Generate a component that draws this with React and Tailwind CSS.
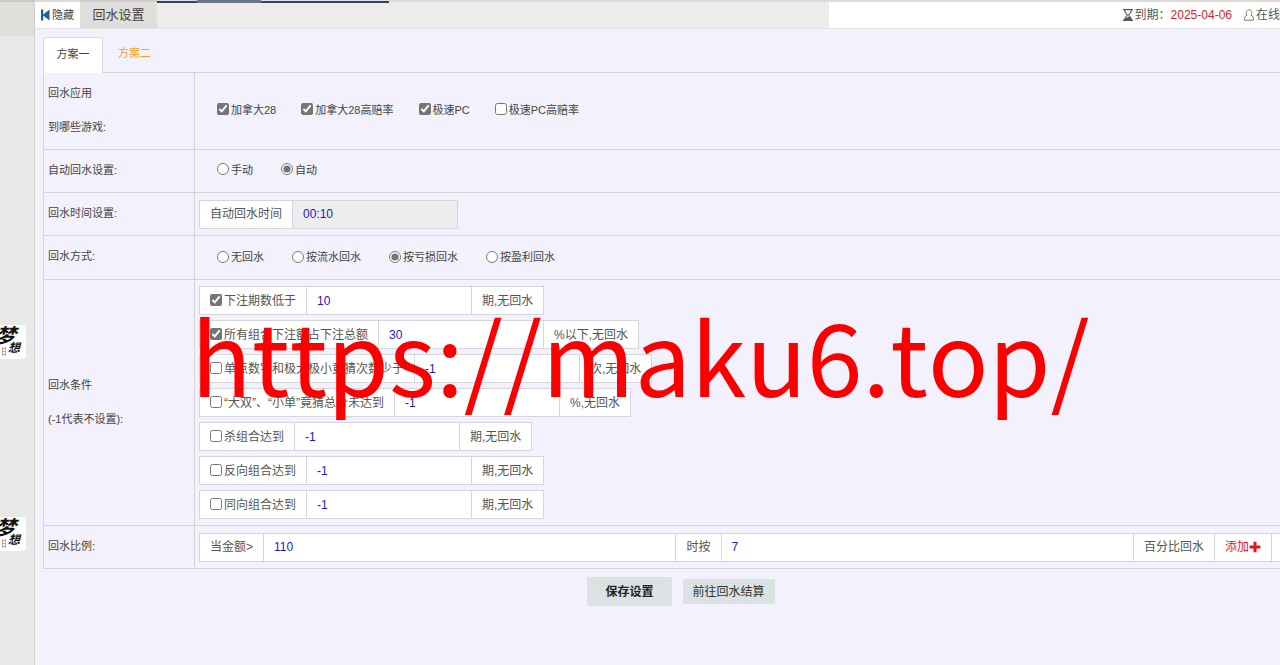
import React from "react";

const FONT = "font-['Liberation_Sans','Noto_Sans_CJK_SC',sans-serif]";

function Avatar() {
  return (
    <div className="relative h-[34px] w-[26px] overflow-hidden rounded-r bg-white font-['Liberation_Serif','Noto_Sans_CJK_SC',serif] font-bold text-[#111] italic">
      <span className="absolute top-px -left-1 text-[20px] leading-5">梦</span>
      <span className="absolute top-[17px] left-2 text-xs leading-3">想</span>
      <svg viewBox="0 0 4 9" className="absolute top-[22px] left-0.5 h-[9px] w-1" fill="none" stroke="#d9a094" aria-hidden="true">
        <path d="M.5 0V9M3.5 0V9M0 1.5H4M0 4.5H4M0 7.5H4" />
      </svg>
    </div>
  );
}

function Row({ label, children, pad = "px-1" }) {
  return (
    <tr className="border-b border-[#d3d3da]">
      <th scope="row" className="border-x border-[#d3d3da] px-1 pb-0.5 text-left align-middle font-normal">
        {label}
      </th>
      <td className={pad}>{children}</td>
    </tr>
  );
}

function Choice({ type, name, label, on }) {
  return (
    <label className="flex items-center gap-0.5">
      <input type={type} name={name} defaultChecked={on} className="mb-0.5 size-3 accent-[#757575]" />
      {label}
    </label>
  );
}

const cell = "flex items-center border border-[#d5d5df] bg-white px-2.5 whitespace-nowrap";
const field = "border-y border-[#d5d5df] bg-white px-2.5 text-[#1a1ac4] outline-none min-w-0";

function Condition({ label, value, unit, on }) {
  return (
    <div className="flex h-[29px] text-xs text-[#555]">
      <label className={`${cell} gap-0.5`}>
        <input type="checkbox" defaultChecked={on} className="mb-0.5 size-3 accent-[#757575]" />
        {label}
      </label>
      <input aria-label={label} defaultValue={value} className={`${field} w-[164px]`} />
      <span className={cell}>{unit}</span>
    </div>
  );
}

const conditions = [
  { label: "下注期数低于", value: "10", unit: "期,无回水", on: true },
  { label: "所有组合下注额占下注总额", value: "30", unit: "%以下,无回水", on: true },
  { label: "单点数字和极大极小竟猜次数少于", value: "-1", unit: "次,无回水" },
  { label: "“大双”、“小单”竟猜总价未达到", value: "-1", unit: "%,无回水" },
  { label: "杀组合达到", value: "-1", unit: "期,无回水" },
  { label: "反向组合达到", value: "-1", unit: "期,无回水" },
  { label: "同向组合达到", value: "-1", unit: "期,无回水" },
];

export default function App() {
  return (
    <div className={`relative flex min-h-screen overflow-hidden bg-[#f3f1fb] text-[11px] text-[#444] ${FONT}`}>
      <aside className="flex w-[35px] shrink-0 flex-col border-r border-[#cfcfd2] bg-[#e9e9e9]">
        <div className="h-9 border-t-2 border-[#cbc9c7] bg-[#e1dfdb]" />
        <div className="mt-[289px] flex flex-col gap-[158px]">
          <Avatar />
          <Avatar />
        </div>
      </aside>

      <main className="min-w-0 flex-1">
        <header className="flex h-[29px] border-b border-[#e4e3e6] bg-white">
          <button type="button" className="flex w-[45px] items-center justify-center gap-0.5 border-t-2 border-[#dcdad8]">
            <svg viewBox="0 0 9 12" className="h-3 w-[9px]" fill="#1c5f9e" aria-hidden="true">
              <path d="M0 0.5H2.2V5.5L8.5 0.5V11.5L2.2 6.5V11.5H0Z" />
            </svg>
            隐藏
          </button>
          <h1 className="flex w-[77px] items-center justify-center border-t-2 border-[#cfcdca] bg-[#e0deda] text-[13px]">
            回水设置
          </h1>
          <div className="flex w-[672px] items-start bg-[#eeecea]">
            <div className="flex h-[3px] w-[232px] border-b-2 border-[#3d4258] bg-[#d8e2ec]">
              <div className="ml-10 h-[3px] w-16 bg-[#6d7688]" />
            </div>
            <div className="h-0.5 flex-1 bg-[#dddbd8]" />
          </div>
          <div className="flex flex-1 items-center justify-end overflow-hidden border-t-2 border-[#dddbd9] text-xs whitespace-nowrap text-[#555]">
            <svg viewBox="0 0 10 12" className="mr-0.5 h-3 w-2.5 shrink-0" aria-hidden="true">
              <path d="M0 .6H10M0 11.4H10M1.5 1C1.5 4 4.3 4.7 4.3 6S1.5 8 1.5 11M8.5 1C8.5 4 5.7 4.7 5.7 6S8.5 8 8.5 11" fill="none" stroke="#555" strokeWidth="1.1" />
              <path d="M1.5 11C1.8 9 4 8.6 5 8S8.2 9 8.5 11Z" fill="#555" />
            </svg>
            <span>到期：</span>
            <span className="text-[#d9232e]">2025-04-06</span>
            <svg viewBox="0 0 10 12" className="mr-0.5 ml-3 h-3 w-2.5 shrink-0" fill="none" stroke="#777" aria-hidden="true">
              <path d="M3 6.2C1.3 3.8 2.4 .8 5 .8S8.7 3.8 7 6.2C9 6.8 9.5 8.3 9.5 11.2H.5C.5 8.3 1 6.8 3 6.2Z" />
            </svg>
            <span>在线</span>
          </div>
        </header>

        <div className="pt-2 pl-2">
          <nav className="flex h-9 border-b border-[#d3d3da]">
            <a href="#plan1" className="-mb-px flex w-[60px] items-center justify-center rounded-t border border-b-0 border-[#d9d9df] bg-white pb-0.5">
              方案一
            </a>
            <a href="#plan2" className="flex items-center px-[15px] pb-0.5 text-[#f5a623]">
              方案二
            </a>
          </nav>

          <form onSubmit={(e) => e.preventDefault()}>
            <table className="w-full table-fixed border-collapse">
              <colgroup>
                <col className="w-[151px]" />
                <col />
              </colgroup>
              <tbody>
                <Row label={<div className="py-[3px] leading-[34px]">回水应用<br />到哪些游戏:</div>} pad="pb-0.5 pl-[22px]">
                  <div className="flex gap-[25px]">
                    <Choice type="checkbox" label="加拿大28" on />
                    <Choice type="checkbox" label="加拿大28高赔率" on />
                    <Choice type="checkbox" label="极速PC" on />
                    <Choice type="checkbox" label="极速PC高赔率" />
                  </div>
                </Row>
                <Row label="自动回水设置:" pad="h-[43px] pb-0.5 pl-[22px]">
                  <div className="flex gap-7">
                    <Choice type="radio" name="mode" label="手动" />
                    <Choice type="radio" name="mode" label="自动" on />
                  </div>
                </Row>
                <Row label="回水时间设置:" pad="h-[43px] px-1">
                  <div className="flex h-[29px] text-xs text-[#555]">
                    <label htmlFor="time" className={cell}>自动回水时间</label>
                    <input id="time" readOnly defaultValue="00:10" className="w-[165px] border border-l-0 border-[#d5d5df] bg-[#ededed] px-2.5 text-[#1a1ac4] outline-none" />
                  </div>
                </Row>
                <Row label="回水方式:" pad="h-11 pl-[22px]">
                  <div className="flex gap-7">
                    <Choice type="radio" name="method" label="无回水" />
                    <Choice type="radio" name="method" label="按流水回水" />
                    <Choice type="radio" name="method" label="按亏损回水" on />
                    <Choice type="radio" name="method" label="按盈利回水" />
                  </div>
                </Row>
                <Row label={<div className="leading-[34px]">回水条件<br />(-1代表不设置):</div>} pad="px-1 py-[6px]">
                  <div className="flex flex-col gap-[5px]">
                    {conditions.map((c) => (
                      <Condition key={c.label} {...c} />
                    ))}
                  </div>
                </Row>
                <Row label="回水比例:" pad="h-[43px] pl-1">
                  <div className="flex h-[29px] text-xs text-[#555]">
                    <label htmlFor="amount" className={cell}>当金额&gt;</label>
                    <input id="amount" defaultValue="110" className={`${field} flex-1`} />
                    <label htmlFor="percent" className={cell}>时按</label>
                    <input id="percent" defaultValue="7" className={`${field} flex-1`} />
                    <span className={cell}>百分比回水</span>
                    <button type="button" className="flex items-center border-y border-r border-[#d5d5df] bg-white px-2.5 whitespace-nowrap text-[#e0181f]">
                      添加
                      <svg viewBox="0 0 12 12" className="size-3" fill="#e0181f" aria-hidden="true">
                        <path d="M4.5 .8H7.5V4.6H11.4V7.4H7.5V11.2H4.5V7.4H.6V4.6H4.5Z" />
                      </svg>
                    </button>
                    <span className="w-2 border-y border-[#d5d5df] bg-white" />
                  </div>
                </Row>
              </tbody>
            </table>

            <div className="flex items-center justify-center gap-[11px] pt-2 pl-[39px] text-xs">
              <button type="submit" className="h-[29px] rounded-xs bg-[#dbe2e2] px-[18px] font-bold text-[#222]">保存设置</button>
              <button type="button" className="h-[25px] rounded-xs bg-[#dbe2e2] px-2.5 text-[#333]">前往回水结算</button>
            </div>
          </form>
        </div>
      </main>

      <div className="pointer-events-none absolute top-[280px] left-[191px] font-['Noto_Sans_CJK_SC',sans-serif] text-[100px] leading-[148px] whitespace-nowrap text-[#fb0000] [font-kerning:none]">
        https://maku6.top/
      </div>
    </div>
  );
}
